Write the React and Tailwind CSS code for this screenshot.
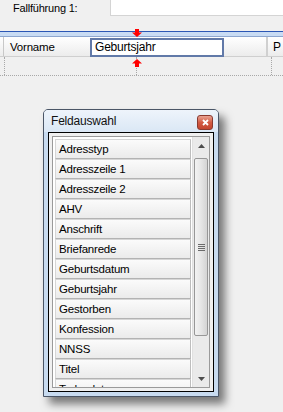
import React from "react";

const fields = [
  "Adresstyp",
  "Adresszeile 1",
  "Adresszeile 2",
  "AHV",
  "Anschrift",
  "Briefanrede",
  "Geburtsdatum",
  "Geburtsjahr",
  "Gestorben",
  "Konfession",
  "NNSS",
  "Titel",
  "Todesdatum",
];

function ArrowDown({ className }) {
  return (
    <svg width="10" height="8" viewBox="0 0 10 8" className={className}>
      <path d="M3 0h4v3.5h3L5 8 0 3.5h3z" fill="#f00" />
    </svg>
  );
}

function ArrowUp({ className }) {
  return (
    <svg width="10" height="8" viewBox="0 0 10 8" className={className}>
      <path d="M3 8h4V4.5h3L5 0 0 4.5h3z" fill="#f00" />
    </svg>
  );
}

function Scrollbar() {
  return (
    <div className="w-[17px] h-full flex flex-col bg-[#eaeaea] border-l border-[#e0e0e0]">
      {/* up */}
      <div className="h-[17px] flex items-center justify-center">
        <svg width="7" height="4" viewBox="0 0 7 4">
          <path d="M0 4L3.5 0 7 4z" fill="#4d4d4d" />
        </svg>
      </div>
      {/* thumb */}
      <div className="mx-[1px] mt-[4px] h-[178px] rounded-[2px] border border-[#979797] bg-gradient-to-r from-[#f3f3f3] via-[#e6e6e6] to-[#d4d4d4] flex items-center justify-center">
        <div className="flex flex-col gap-[1px]">
          <div className="w-[7px] h-[1px] bg-[#6b6b6b]" />
          <div className="w-[7px] h-[1px] bg-[#6b6b6b]" />
          <div className="w-[7px] h-[1px] bg-[#6b6b6b]" />
          <div className="w-[7px] h-[1px] bg-[#6b6b6b]" />
        </div>
      </div>
      <div className="flex-1" />
      {/* down */}
      <div className="h-[17px] flex items-center justify-center">
        <svg width="7" height="4" viewBox="0 0 7 4">
          <path d="M0 0L3.5 4 7 0z" fill="#4d4d4d" />
        </svg>
      </div>
    </div>
  );
}

export default function App() {
  return (
    <div
      className="relative w-[283px] h-[412px] overflow-hidden bg-[#f0f0f0] text-black text-[11px] tracking-[-0.2px]"
      style={{ fontFamily: '"Liberation Sans", Arial, sans-serif' }}
    >
      {/* top field */}
      <div className="flex h-[16px]">
        <div className="w-[110px] pl-[13px] leading-[16px]">Fallführung 1:</div>
        <div className="flex-1 bg-white border-l border-b border-[#d4d4d4]" />
      </div>

      {/* grid header */}
      <div className="mt-[15px] h-[1px] bg-[#2c57b5]" />
      <div className="h-[4px] bg-[#c9dcf4]" />
      <div className="h-[1px] bg-[#8ea7cf]" />
      <div className="flex h-[20px] bg-gradient-to-b from-white to-[#ececec] border-b border-[#cfcfcf]">
        <div className="w-[4px] border-r border-[#c8c8c8]" />
        <div className="w-[86px] pl-[6px] leading-[20px] text-[11.5px]">Vorname</div>
        <div className="w-[134px] h-[19px] mt-[1px] border-2 border-[#6179a8] bg-white pl-[3px] leading-[15px] text-[12px]">
          Geburtsjahr
        </div>
        <div className="w-[44px] border-r-2 border-[#d0d0d0]" />
        <div className="flex-1 pl-[5px] leading-[20px] text-[12px]">P</div>
      </div>
      <div className="flex h-[19px] border-b border-dotted border-[#a8a8a8]">
        <div className="w-[5px] border-r border-dotted border-[#a8a8a8]" />
        <div className="w-[132px] border-r border-dotted border-[#a8a8a8]" />
        <div className="w-[135px] border-r border-dotted border-[#a8a8a8]" />
      </div>

      <ArrowDown className="absolute left-[132px] top-[29px]" />
      <ArrowUp className="absolute left-[132px] top-[59px]" />

      {/* dialog */}
      <div className="ml-[43px] mt-[33px] w-[176px] h-[288px] flex flex-col border border-[#4a5566] rounded-t-[5px] bg-[#c8dbf0] shadow-[6px_7px_9px_rgba(0,0,0,0.5)]">
        <div className="h-[22px] flex items-center justify-between pl-[7px] pr-[5px] bg-gradient-to-b from-[#eef4fb] to-[#dae7f5] rounded-t-[4px]">
          <span className="text-[12px] text-[#111]">Feldauswahl</span>
          <div className="w-[16px] h-[15px] mt-[2px] rounded-[3px] border border-[#8a3a30] bg-gradient-to-b from-[#e8a394] via-[#d25a43] to-[#c4452f] flex items-center justify-center">
            <svg width="7" height="7" viewBox="0 0 7 7">
              <path d="M1 1l5 5M6 1L1 6" stroke="#fff" strokeWidth="1.8" />
            </svg>
          </div>
        </div>
        <div className="mx-[4px] h-[260px] border border-black bg-[#f0f0f0] p-[3px]">
          <div className="h-full border border-[#9a9a9a] bg-white flex">
            <div className="flex-1 overflow-hidden pl-[2px] pr-[1px] pt-[2px]">
              {fields.map((f) => (
                <div
                  key={f}
                  className="h-[20px] pl-[3px] leading-[18px] text-[11.5px] border border-[#d6d6d6] border-b-[#b3b3b3] border-r-[#bdbdbd] bg-gradient-to-b from-[#fbfbfb] to-[#ebebeb]"
                >
                  {f}
                </div>
              ))}
            </div>
            <Scrollbar />
          </div>
        </div>
      </div>
    </div>
  );
}
